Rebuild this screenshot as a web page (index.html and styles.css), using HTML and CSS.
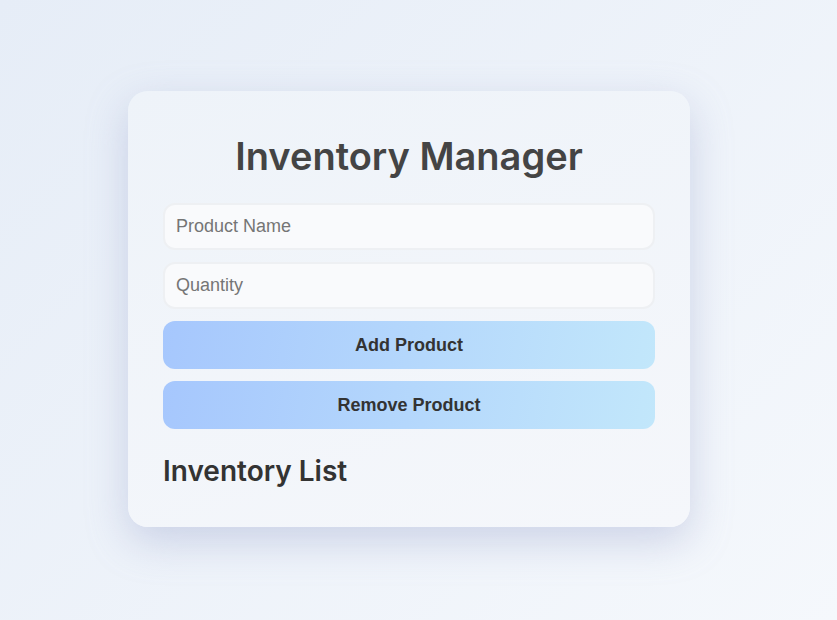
FILE: index.html
```html
<!DOCTYPE html>
<html lang="en">
<head>
<meta charset="utf-8">
<title>Inventory Manager</title>
<link rel="stylesheet" href="styles.css">
</head>
<body>
<main class="card">
  <h1 class="title">Inventory Manager</h1>
  <input class="field" type="text" placeholder="Product Name">
  <input class="field" type="number" placeholder="Quantity">
  <button class="btn" type="button">Add Product</button>
  <button class="btn" type="button">Remove Product</button>
  <h2 class="subtitle">Inventory List</h2>
  <ul class="list"></ul>
</main>
</body>
</html>
```
FILE: styles.css
```css
* { box-sizing: border-box; }
html, body { height: 100%; }
body {
  margin: 0;
  padding: 0 19px 2px 0;
  display: flex;
  align-items: center;
  justify-content: center;
  background: linear-gradient(135deg, #e6edf7 0%, #f5f8fc 100%);
  font-family: "Liberation Sans", Arial, sans-serif;
}
.card {
  width: 562px;
  padding: 38px 35px 14px;
  border-radius: 20px;
  background: linear-gradient(160deg, #eef3f9 0%, #f5f7fb 100%);
  box-shadow: 0 14px 40px rgba(145, 155, 200, 0.38);
  display: flex;
  flex-direction: column;
  gap: 12px;
}
.title {
  margin: 0 0 8px;
  text-align: center;
  font-family: "Inter", "Open Sans", sans-serif;
  font-weight: 600;
  font-size: 38px;
  line-height: 54px;
  color: #444;
}
.field {
  width: 100%;
  height: 47px;
  padding: 0 11px;
  border: 2px solid #eef0f3;
  border-radius: 12px;
  background: #f9fafc;
  font-family: "Liberation Sans", Arial, sans-serif;
  font-size: 18px;
  color: #333;
  outline: none;
  -moz-appearance: textfield;
}
.field::-webkit-outer-spin-button,
.field::-webkit-inner-spin-button { -webkit-appearance: none; margin: 0; }
.field::placeholder { color: #757575; }
.btn {
  width: 100%;
  height: 48px;
  border: 0;
  border-radius: 12px;
  background: linear-gradient(100deg, #a6c7fd 0%, #c2e7fb 100%);
  font-family: "Liberation Sans", Arial, sans-serif;
  font-weight: 700;
  font-size: 18px;
  color: #333;
  cursor: pointer;
}
.subtitle {
  margin: 10px 0 0;
  font-family: "Inter", "Open Sans", sans-serif;
  font-weight: 600;
  font-size: 28px;
  line-height: 40px;
  color: #333;
}
.list { margin: 0; padding: 0; list-style: none; min-height: 10px; }
```
